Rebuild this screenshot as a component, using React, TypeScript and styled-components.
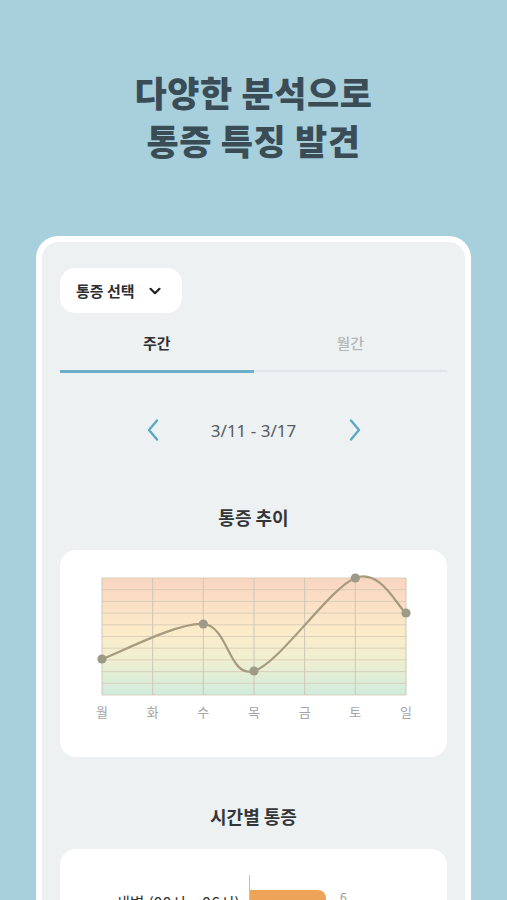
import React from "react";
import styled, { createGlobalStyle } from "styled-components";

const Global = createGlobalStyle`
  html, body { margin: 0; padding: 0; background: #a8d0dc; }
  body { font-family: "Noto Sans CJK KR", "Noto Sans", sans-serif; overflow: hidden; }
  * { box-sizing: border-box; }
`;

const Page = styled.div`
  width: 507px;
  height: 900px;
  background: #a8d0dc;
  overflow: hidden;
  padding-top: 68px;
`;

const Headline = styled.h1`
  margin: 0;
  text-align: center;
  font-size: 35px;
  line-height: 48px;
  font-weight: 900;
  color: #3a4c55;
  letter-spacing: 0.6px;
`;

const Frame = styled.div`
  margin: 72px 36px 0;
  width: 435px;
  border: 6px solid #ffffff;
  border-bottom: none;
  border-radius: 22px 22px 0 0;
  background: #edf1f2;
  padding: 26px 18px 0;
  height: 700px;
`;

const Dropdown = styled.button`
  display: flex;
  align-items: center;
  gap: 13px;
  height: 45px;
  width: 122px;
  padding: 0 0 0 16px;
  border: none;
  border-radius: 15px;
  background: #ffffff;
  font-family: inherit;
  font-size: 15px;
  font-weight: 600;
  color: #2e2e2e;
`;

const Tabs = styled.div`
  display: flex;
`;

const Tab = styled.div<{ $active?: boolean }>`
  flex: 1;
  text-align: center;
  padding: 18px 0 15px;
  font-size: 15px;
  line-height: 24px;
  font-weight: ${(p) => (p.$active ? 600 : 500)};
  color: ${(p) => (p.$active ? "#2f2f2f" : "#b4b6b8")};
  border-bottom: ${(p) => (p.$active ? "3px solid #6aafc7" : "2px solid #e3e6e8")};
  margin-bottom: ${(p) => (p.$active ? "0" : "1px")};
`;

const DateNav = styled.div`
  display: flex;
  align-items: center;
  justify-content: center;
  gap: 38px;
  margin-top: 42px;
  height: 30px;
`;

const DateText = styled.span`
  font-family: "Noto Sans", "Noto Sans CJK KR", sans-serif;
  font-size: 17px;
  color: #555a5e;
  min-width: 112px;
  text-align: center;
`;

const NavBtn = styled.span`
  display: flex;
  color: #5ba8c4;
`;

const SectionTitle = styled.h2<{ $top: number }>`
  margin: ${(p) => p.$top}px 0 0;
  text-align: center;
  font-size: 18px;
  line-height: 28px;
  font-weight: 700;
  color: #333638;
`;

const Card = styled.div<{ $top: number }>`
  margin-top: ${(p) => p.$top}px;
  background: #ffffff;
  border-radius: 16px;
`;

const ChartSvg = styled.svg`
  display: block;
`;

const BarRow = styled.div`
  display: flex;
  align-items: flex-start;
  padding-top: 26px;
  height: 120px;
`;

const BarLabel = styled.div`
  width: 189px;
  text-align: right;
  font-size: 16px;
  line-height: 22px;
  color: #333;
  padding-top: 16px;
  padding-right: 9px;
`;

const Axis = styled.div`
  width: 1px;
  height: 100px;
  background: #bfc3c5;
`;

const Bar = styled.div<{ $w: number }>`
  width: ${(p) => p.$w}px;
  height: 24px;
  margin-top: 15px;
  background: #eea458;
  border-radius: 0 8px 8px 0;
`;

const BarValue = styled.div`
  font-size: 12px;
  color: #999;
  margin-left: 14px;
  margin-top: 13px;
`;

const Chevron = ({ dir }: { dir: "left" | "right" | "down" }) => {
  if (dir === "down")
    return (
      <svg width="14" height="14" viewBox="0 0 14 14">
        <path d="M2.5 4.8 L7 9.2 L11.5 4.8" fill="none" stroke="#222" strokeWidth="2.2" strokeLinecap="round" strokeLinejoin="round" />
      </svg>
    );
  return (
    <svg width="14" height="24" viewBox="0 0 14 24">
      <path
        d={dir === "left" ? "M11 2.5 L3 12 L11 21.5" : "M3 2.5 L11 12 L3 21.5"}
        fill="none"
        stroke="currentColor"
        strokeWidth="2.4"
        strokeLinecap="round"
        strokeLinejoin="round"
      />
    </svg>
  );
};

// chart coordinates are relative to chart card
const PL = 42;
const PT = 28;
const PW = 304;
const PH = 117;
const days = ["월", "화", "수", "목", "금", "토", "일"];
const colX = (i: number) => PL + (PW / 6) * i;
const pts: [number, number][] = [
  [colX(0), 109],
  [colX(2), 74],
  [colX(3), 121],
  [colX(5), 28],
  [colX(6), 63],
];

function catmull(points: [number, number][]) {
  let d = `M${points[0][0]} ${points[0][1]}`;
  for (let i = 0; i < points.length - 1; i++) {
    const p0 = points[i - 1] || points[i];
    const p1 = points[i];
    const p2 = points[i + 1];
    const p3 = points[i + 2] || p2;
    const t = 6;
    const c1x = p1[0] + (p2[0] - p0[0]) / t;
    const c1y = p1[1] + (p2[1] - p0[1]) / t;
    const c2x = p2[0] - (p3[0] - p1[0]) / t;
    const c2y = p2[1] - (p3[1] - p1[1]) / t;
    d += ` C${c1x} ${c1y} ${c2x} ${c2y} ${p2[0]} ${p2[1]}`;
  }
  return d;
}

const TrendChart = () => (
  <ChartSvg width="387" height="207" viewBox="0 0 387 207">
    <defs>
      <linearGradient id="bg" x1="0" y1="0" x2="0" y2="1">
        <stop offset="0" stopColor="#f9d5c1" />
        <stop offset="0.45" stopColor="#fcebc9" />
        <stop offset="0.7" stopColor="#f0efd0" />
        <stop offset="1" stopColor="#d0ebdd" />
      </linearGradient>
    </defs>
    <rect x={PL} y={PT} width={PW} height={PH} fill="url(#bg)" />
    {Array.from({ length: 11 }).map((_, i) => (
      <line key={"h" + i} x1={PL} x2={PL + PW} y1={PT + (PH / 10) * i} y2={PT + (PH / 10) * i} stroke="#d6cbb6" strokeWidth="1" opacity="0.85" />
    ))}
    {days.map((_, i) => (
      <line key={"v" + i} x1={colX(i)} x2={colX(i)} y1={PT} y2={PT + PH} stroke="#cdc7b8" strokeWidth="1" />
    ))}
    <path d={catmull(pts)} fill="none" stroke="#a59a7e" strokeWidth="2.2" strokeLinecap="round" />
    {pts.map(([x, y], i) => (
      <circle key={i} cx={x} cy={y} r="4.6" fill="#9d9b88" />
    ))}
    {days.map((d, i) => (
      <text
        key={d}
        x={colX(i)}
        y={167}
        textAnchor="middle"
        fontSize="13"
        fill="#a3a5a7"
        fontFamily='"Noto Sans CJK KR", sans-serif'
      >
        {d}
      </text>
    ))}
  </ChartSvg>
);

export default function App() {
  return (
    <Page>
      <Global />
      <Headline>
        다양한 분석으로
        <br />
        통증 특징 발견
      </Headline>
      <Frame>
        <Dropdown>
          통증 선택
          <Chevron dir="down" />
        </Dropdown>
        <Tabs>
          <Tab $active>주간</Tab>
          <Tab>월간</Tab>
        </Tabs>
        <DateNav>
          <NavBtn>
            <Chevron dir="left" />
          </NavBtn>
          <DateText>3/11 - 3/17</DateText>
          <NavBtn>
            <Chevron dir="right" />
          </NavBtn>
        </DateNav>
        <SectionTitle $top={58}>통증 추이</SectionTitle>
        <Card $top={19}>
          <TrendChart />
        </Card>
        <SectionTitle $top={45}>시간별 통증</SectionTitle>
        <Card $top={19}>
          <BarRow>
            <BarLabel>새벽 (00시 ~ 06시)</BarLabel>
            <Axis />
            <Bar $w={76} />
            <BarValue>6</BarValue>
          </BarRow>
        </Card>
      </Frame>
    </Page>
  );
}
